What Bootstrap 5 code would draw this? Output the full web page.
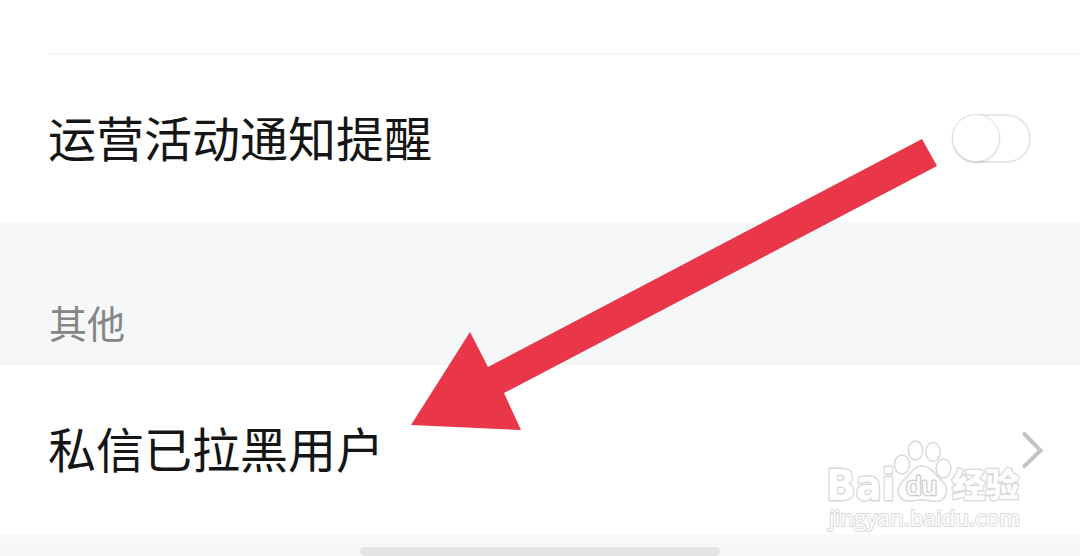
<!DOCTYPE html>
<html lang="zh-CN">
<head>
    <meta charset="UTF-8">
    <meta name="viewport" content="width=device-width, initial-scale=1.0">
    <title>通知设置</title>
    <link href="https://cdn.jsdelivr.net/npm/bootstrap@5.3.3/dist/css/bootstrap.min.css" rel="stylesheet">
    <style>
        body {
            background: #f6f7f9;
            font-family: "Noto Sans CJK SC", sans-serif;
            height: 556px;
        }
        .top-space {
            height: 53px;
        }
        .divider {
            height: 2px;
            margin-left: 48px;
            background: #f4f4f4;
        }
        .setting-row {
            padding-left: 48px;
            font-size: 48px;
            line-height: 1;
            color: #151515;
        }
        .setting-row span {
            padding-bottom: 5px;
        }
        .row-notify {
            height: 167px;
            padding-right: 49px;
        }
        .row-blocked {
            height: 169px;
            padding-right: 36px;
        }
        .section-title {
            height: 143px;
            padding: 0 48px 24px 49px;
            font-size: 38px;
            line-height: 1;
            color: #858585;
        }
        .toggle {
            width: 79px;
            height: 49px;
            margin-bottom: 1px;
            border: 2px solid #e7e7e7;
        }
        .toggle-knob {
            width: 48px;
            height: 48px;
            margin: -2px 0 0 -2px;
            border: 1px solid #e2e2e2;
            box-shadow: 0 1px 2px rgba(0, 0, 0, 0.14);
        }
        .bottom-strip {
            height: 22px;
            background: linear-gradient(#f9f9f9 0, #f8f8f8 8px, #f6f7f9 14px);
        }
        .home-bar {
            width: 360px;
            height: 9px;
            border-radius: 5px;
            background: #e3e4e6;
        }
        .overlay {
            pointer-events: none;
        }
    </style>
</head>
<body class="position-relative overflow-hidden">
    <main class="d-flex flex-column">
        <div class="bg-white">
            <div class="top-space"></div>
            <div class="divider"></div>
            <div class="setting-row row-notify d-flex justify-content-between align-items-center">
                <span>运营活动通知提醒</span>
                <div class="toggle rounded-pill bg-white" role="switch" aria-checked="false">
                    <div class="toggle-knob rounded-circle bg-white"></div>
                </div>
            </div>
        </div>

        <div class="section-title d-flex align-items-end">其他</div>

        <div class="setting-row row-blocked bg-white d-flex justify-content-between align-items-center">
            <span>私信已拉黑用户</span>
            <svg width="22" height="36" viewBox="0 0 22 36" fill="none" stroke="#c4c4c4" stroke-width="4" stroke-linecap="round" stroke-linejoin="miter">
                <path d="M2.5 2 L18.5 18.5 L2.5 34"/>
            </svg>
        </div>

        <div class="bottom-strip d-flex justify-content-center align-items-end">
            <div class="home-bar"></div>
        </div>
    </main>

    <!-- Red arrow and watermark above the list -->
    <svg class="overlay position-absolute top-0 start-0" width="1080" height="556" viewBox="0 0 1080 556">
        <polygon points="411,425 470,332 488,367 922,139 937,166 504,393 521,430" fill="#e93648"/>

        <g fill="#fff" stroke="#d9d9d9" stroke-width="1.5" stroke-linejoin="round" paint-order="stroke">
            <text x="826" y="500" font-family="DejaVu Sans, sans-serif" font-weight="bold" font-size="42" textLength="69" lengthAdjust="spacingAndGlyphs" stroke-width="2.8">Bai</text>
            <g fill="none">
                <ellipse cx="902" cy="464.5" rx="7.5" ry="9.5"/>
                <ellipse cx="915.5" cy="450.5" rx="7.2" ry="9.6"/>
                <ellipse cx="933" cy="452" rx="7.2" ry="9.4"/>
                <ellipse cx="943.5" cy="468.5" rx="7.4" ry="9.4"/>
                <path d="M922 466 C914 466 911 473 905 479 C899 484 896 491 900 497 C905 504 914 500 922 500 C931 500 939 504 944 498 C949 491 946 484 940 479 C934 473 931 466 922 466 Z"/>
            </g>
            <text x="906" y="495" font-family="Liberation Sans, sans-serif" font-size="26" textLength="31" lengthAdjust="spacingAndGlyphs" stroke="#d0d0d0" stroke-width="2.8">du</text>
            <text x="952" y="497" font-family="Noto Sans CJK SC, sans-serif" font-weight="900" font-size="33" textLength="67" lengthAdjust="spacingAndGlyphs" stroke-width="2.6">经验</text>
            <text x="829" y="526" font-family="Open Sans, sans-serif" font-size="22" textLength="191" lengthAdjust="spacingAndGlyphs" stroke-width="2">jingyan.baidu.com</text>
        </g>
    </svg>
    <script src="https://cdn.jsdelivr.net/npm/bootstrap@5.3.3/dist/js/bootstrap.bundle.min.js"></script>
</body>
</html>
